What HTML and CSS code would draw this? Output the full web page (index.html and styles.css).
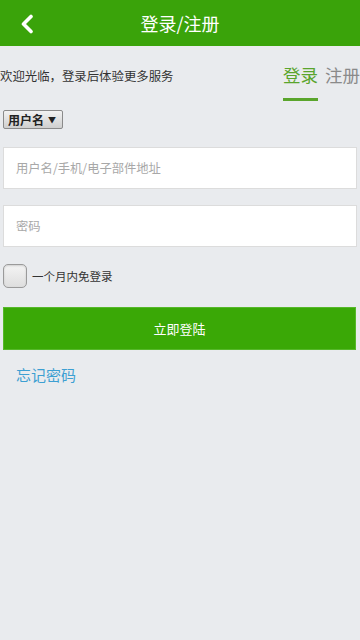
FILE: index.html
```html
<!DOCTYPE html>
<html lang="zh">
<head>
<meta charset="utf-8">
<title>登录/注册</title>
<link rel="stylesheet" href="styles.css">
</head>
<body>
<header class="topbar">
  <a class="back" href="#" aria-label="返回">
    <svg width="14" height="20" viewBox="0 0 14 20"><path d="M11 2.5 L3.5 10 L11 17.5" fill="none" stroke="#fff" stroke-width="3.6" stroke-linecap="round" stroke-linejoin="round"/></svg>
  </a>
  <h1 class="title">登录/注册</h1>
  <span></span>
</header>
<main class="content">
  <div class="intro">
    <p class="welcome">欢迎光临，登录后体验更多服务</p>
    <nav class="tabs">
      <a class="tab active" href="#">登录</a>
      <a class="tab" href="#">注册</a>
    </nav>
  </div>
  <div class="select-row">
    <span class="select">用户名<span class="arrow">▼</span></span>
  </div>
  <div class="field"><span class="placeholder">用户名/手机/电子部件地址</span></div>
  <div class="field"><span class="placeholder">密码</span></div>
  <label class="remember"><span class="checkbox"></span><span class="remember-text">一个月内免登录</span></label>
  <button class="submit">立即登陆</button>
  <a class="forgot" href="#">忘记密码</a>
</main>
</body>
</html>
```
FILE: styles.css
```css
html, body {
  margin: 0;
  padding: 0;
}
body {
  width: 360px;
  height: 640px;
  background: #e9ebee;
  font-family: "Noto Sans CJK SC", "Noto Sans", sans-serif;
  color: #333;
  overflow: hidden;
}
.topbar {
  height: 46px;
  background: #3aa30a;
  display: grid;
  grid-template-columns: 60px 1fr 60px;
  align-items: center;
}
.back {
  display: flex;
  padding-left: 20px;
  padding-top: 1px;
}
.title {
  margin: 0;
  text-align: center;
  color: #fff;
  font-size: 18px;
  font-weight: normal;
  line-height: 46px;
}
.content {
  display: flex;
  flex-direction: column;
  padding: 0 3px;
}
.intro {
  display: flex;
  justify-content: space-between;
  height: 58px;
  margin: 0 -3px;
}
.welcome {
  margin: 0;
  padding-top: 21px;
  font-size: 12.4px;
  line-height: 18px;
  color: #333;
  white-space: nowrap;
}
.tabs {
  display: flex;
  gap: 7px;
  padding-top: 18px;
}
.tab {
  font-size: 17.5px;
  line-height: 22px;
  color: #8a8a8a;
  text-decoration: none;
  height: 37px;
  box-sizing: border-box;
}
.tab.active {
  color: #5aa52c;
  border-bottom: 3px solid #5aa52c;
}
.select-row {
  display: flex;
  padding-top: 6px;
  height: 43px;
  box-sizing: border-box;
}
.select {
  display: inline-flex;
  align-items: center;
  justify-content: space-between;
  white-space: nowrap;
  height: 19px;
  width: 60px;
  box-sizing: border-box;
  padding: 0 6px 0 4px;
  border: 1px solid #8a8a8a;
  border-radius: 2px;
  background: linear-gradient(#f2f2f2, #cfcfcf);
  font-size: 12px;
  font-weight: bold;
  color: #222;
}
.arrow {
  font-size: 8px;
  font-weight: normal;
}
.field {
  height: 42px;
  box-sizing: border-box;
  background: #fff;
  border: 1px solid #dcdcdc;
  display: flex;
  align-items: center;
  padding-left: 12px;
  margin-bottom: 16px;
}
.placeholder {
  font-size: 12.3px;
  color: #a8a8a8;
}
.remember {
  display: flex;
  align-items: center;
  gap: 5px;
  height: 25px;
}
.checkbox {
  width: 22px;
  height: 22px;
  border: 1px solid #9a9a9a;
  border-radius: 5px;
  background: linear-gradient(#f4f4f4, #dedede);
  box-shadow: inset 0 1px 2px rgba(0,0,0,0.15);
}
.remember-text {
  font-size: 11.5px;
  color: #333;
}
.submit {
  margin-top: 19px;
  height: 43px;
  width: 353px;
  border: 1px solid #56b82a;
  background: #3aa806;
  color: #fff;
  font-family: inherit;
  font-size: 13px;
  padding: 0;
}
.forgot {
  align-self: flex-start;
  margin-top: 15px;
  margin-left: 13px;
  font-size: 15px;
  line-height: 20px;
  color: #3d9fd2;
  text-decoration: none;
}
```
